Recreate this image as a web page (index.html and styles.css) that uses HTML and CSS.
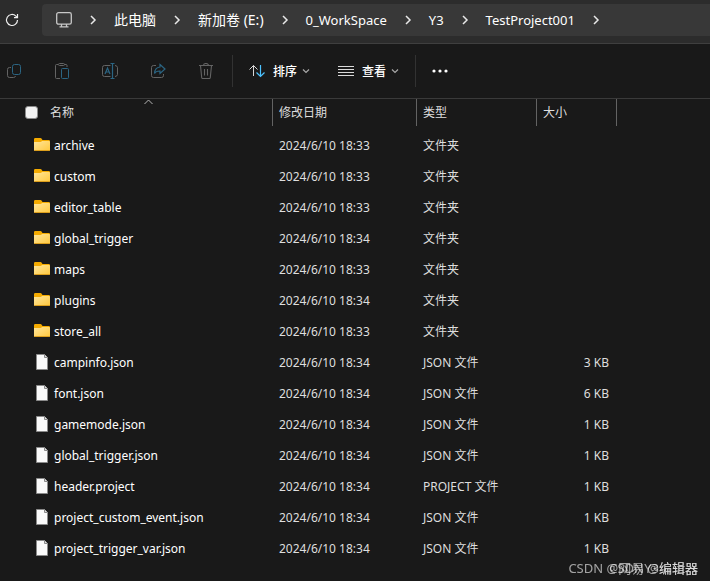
FILE: index.html
```html
<!DOCTYPE html>
<html lang="zh-CN">

<head>
	<meta charset="UTF-8">
	<meta name="viewport" content="width=device-width, initial-scale=1.0">
	<title>TestProject001</title>
	<link rel="stylesheet" href="styles.css">
</head>

<body>

	<!-- Shared icons -->
	<svg class="sprite" aria-hidden="true">
		<defs>
			<linearGradient id="folder-front" x1="0" y1="0" x2="1" y2="1">
				<stop offset="0" stop-color="#ffe69c"></stop>
				<stop offset="1" stop-color="#ffc83d"></stop>
			</linearGradient>
		</defs>
		<symbol id="folder" viewBox="0 0 16 16">
			<path d="M0 2.200Q0 1 1.200 1H6.500q.6 0 1 .5L8.500 3h6.300Q16 3 16 4.200V8H0z" fill="#f5ab00"></path>
			<path d="M0 5h6.500q.6 0 1-.4l.6-.6H15q1 0 1 1v8q0 1-1 1H1q-1 0-1-1z" fill="url(#folder-front)"></path>
			<path d="M.5 13.500h15" stroke="#dd9f1c"></path>
		</symbol>
		<symbol id="file" viewBox="0 0 16 16">
			<path d="M2.500.5h8l3 3v12h-11z" fill="#fafafa" stroke="#8a8a8a"></path>
			<path d="M10.500.5v3h3" fill="#dcdcdc" stroke="#8a8a8a"></path>
		</symbol>
		<symbol id="chevron-right" viewBox="0 0 8 10">
			<path d="M2 1l4 4-4 4" fill="none" stroke="#e8e8e8" stroke-width="1.500"></path>
		</symbol>
		<symbol id="chevron-down" viewBox="0 0 8 8">
			<path d="M1 2.500l3 3 3-3" fill="none" stroke="#a8a8a8" stroke-width="1.200"></path>
		</symbol>
	</svg>

	<header class="address-bar">
		<button type="button" class="refresh" aria-label="刷新">
			<svg width="14" height="14" viewBox="0 0 14 14" fill="none" stroke="#f0f0f0" stroke-width="1.200">
				<path d="M12.500 7A5.500 5.500 0 1 1 10.900 3.100L12.500 4.700"></path>
				<path d="M12.500 1v3.700H9"></path>
			</svg>
		</button>
		<nav class="breadcrumb">
			<svg class="computer" width="16" height="16" viewBox="0 0 16 16" fill="none" stroke="#c8c8c8" stroke-width="1.300">
				<rect x=".7" y=".7" width="14.600" height="11.500" rx="1.800"></rect>
				<path d="M5.500 12v2.500M10.500 12v2.500M3.500 14.800h9"></path>
			</svg>
			<svg class="arrow"><use href="#chevron-right"></use></svg>
			<a href="#" class="zh">此电脑</a>
			<svg class="arrow"><use href="#chevron-right"></use></svg>
			<a href="#" class="zh">新加卷 (E:)</a>
			<svg class="arrow"><use href="#chevron-right"></use></svg>
			<a href="#">0_WorkSpace</a>
			<svg class="arrow"><use href="#chevron-right"></use></svg>
			<a href="#">Y3</a>
			<svg class="arrow"><use href="#chevron-right"></use></svg>
			<a href="#">TestProject001</a>
			<svg class="arrow"><use href="#chevron-right"></use></svg>
		</nav>
	</header>

	<div class="toolbar">
		<div class="actions">
			<button type="button" aria-label="复制" disabled>
				<svg width="16" height="16" viewBox="0 0 16 16" fill="none">
					<path d="M5 4.500H3.500a2 2 0 0 0-2 2v6a2 2 0 0 0 2 2h4a2 2 0 0 0 2-1.500" stroke="#646464"></path>
					<rect x="6.500" y="1.500" width="8" height="10" rx="2" stroke="#2b6583"></rect>
				</svg>
			</button>
			<button type="button" aria-label="粘贴" disabled>
				<svg width="16" height="16" viewBox="0 0 16 16" fill="none">
					<path d="M4 1.500H2.500a1 1 0 0 0-1 1v12a1 1 0 0 0 1 1H6M10.500 1.500H12a1 1 0 0 1 1 1V4" stroke="#646464"></path>
					<rect x="4.500" y=".5" width="6" height="2" rx="1" stroke="#646464"></rect>
					<rect x="7.500" y="5.500" width="7" height="10" rx="1" stroke="#2b6583"></rect>
				</svg>
			</button>
			<button type="button" aria-label="重命名" disabled>
				<svg width="18" height="16" viewBox="0 0 18 16" fill="none">
					<path d="M9.500 2.500h-6a2 2 0 0 0-2 2v7a2 2 0 0 0 2 2h6M14 2.500a2.500 2.500 0 0 1 2.500 2v7a2.500 2.500 0 0 1-2.500 2" stroke="#646464"></path>
					<path d="M4 11l2.500-6L9 11M5 9h3M11.500.5v15M9.500.5h4M9.500 15.500h4" stroke="#2b6583" stroke-width="1.200"></path>
				</svg>
			</button>
			<button type="button" aria-label="共享" disabled>
				<svg width="16" height="16" viewBox="0 0 16 16" fill="none">
					<path d="M6 2.500H3.500a2 2 0 0 0-2 2v8a2 2 0 0 0 2 2h8a2 2 0 0 0 2-2V11" stroke="#646464"></path>
					<path d="M10 1.500l5 4.500-5 4.500V8Q6 7.800 4.500 10.500 4.800 4.500 10 4z" stroke="#2b6583" stroke-width="1.200"></path>
				</svg>
			</button>
			<button type="button" aria-label="删除" disabled>
				<svg width="16" height="16" viewBox="0 0 16 16" fill="none" stroke="#646464" stroke-width="1.100">
					<path d="M1 2.500h14M5.500 2.500a2.500 2 0 0 1 5 0M2.500 2.500l1.200 12q.1 1 1 1h6.600q.9 0 1-1l1.200-12M6.500 6v6.500M9.500 6v6.500"></path>
				</svg>
			</button>
		</div>
		<div class="actions-menu">
			<button type="button">
				<svg width="16" height="14" viewBox="0 0 16 14" fill="none">
					<path d="M4.500 12V1.500M.5 5.500l4-4 4 4" stroke="#d8d8d8"></path>
					<path d="M11.500 1v11.500M7.500 8.500l4 4 4-4" stroke="#4cc2ff" stroke-width="1.200"></path>
				</svg>
				<span>排序</span>
				<svg class="caret"><use href="#chevron-down"></use></svg>
			</button>
			<button type="button">
				<svg width="16" height="14" viewBox="0 0 16 14" stroke="#dadada">
					<path d="M0 2.500h16M0 5.500h16M0 8.500h16M0 11.500h16"></path>
				</svg>
				<span>查看</span>
				<svg class="caret"><use href="#chevron-down"></use></svg>
			</button>
		</div>
		<button type="button" class="more" aria-label="更多">
			<svg width="16" height="4" viewBox="0 0 16 4" fill="#ffffff">
				<circle cx="2" cy="2" r="1.600"></circle>
				<circle cx="8" cy="2" r="1.600"></circle>
				<circle cx="14" cy="2" r="1.600"></circle>
			</svg>
		</button>
	</div>

	<main class="files">
		<svg class="sort-mark" width="9" height="6" viewBox="0 0 9 6" fill="none" stroke="#b4b4b4">
			<path d="M.5 5l4-4 4 4"></path>
		</svg>
		<table>
			<colgroup>
				<col class="col-name">
				<col class="col-date">
				<col class="col-type">
				<col class="col-size">
				<col>
			</colgroup>
			<thead>
				<tr>
					<th>
						<label class="select-all"><input type="checkbox"> 名称</label>
					</th>
					<th>修改日期</th>
					<th>类型</th>
					<th>大小</th>
					<td></td>
				</tr>
			</thead>
			<tbody>
				<tr><td><svg><use href="#folder"></use></svg>archive</td><td>2024/6/10 18:33</td><td>文件夹</td><td></td><td></td></tr>
				<tr><td><svg><use href="#folder"></use></svg>custom</td><td>2024/6/10 18:33</td><td>文件夹</td><td></td><td></td></tr>
				<tr><td><svg><use href="#folder"></use></svg>editor_table</td><td>2024/6/10 18:33</td><td>文件夹</td><td></td><td></td></tr>
				<tr><td><svg><use href="#folder"></use></svg>global_trigger</td><td>2024/6/10 18:34</td><td>文件夹</td><td></td><td></td></tr>
				<tr><td><svg><use href="#folder"></use></svg>maps</td><td>2024/6/10 18:33</td><td>文件夹</td><td></td><td></td></tr>
				<tr><td><svg><use href="#folder"></use></svg>plugins</td><td>2024/6/10 18:34</td><td>文件夹</td><td></td><td></td></tr>
				<tr><td><svg><use href="#folder"></use></svg>store_all</td><td>2024/6/10 18:33</td><td>文件夹</td><td></td><td></td></tr>
				<tr><td><svg><use href="#file"></use></svg>campinfo.json</td><td>2024/6/10 18:34</td><td>JSON 文件</td><td>3 KB</td><td></td></tr>
				<tr><td><svg><use href="#file"></use></svg>font.json</td><td>2024/6/10 18:34</td><td>JSON 文件</td><td>6 KB</td><td></td></tr>
				<tr><td><svg><use href="#file"></use></svg>gamemode.json</td><td>2024/6/10 18:34</td><td>JSON 文件</td><td>1 KB</td><td></td></tr>
				<tr><td><svg><use href="#file"></use></svg>global_trigger.json</td><td>2024/6/10 18:34</td><td>JSON 文件</td><td>1 KB</td><td></td></tr>
				<tr><td><svg><use href="#file"></use></svg>header.project</td><td>2024/6/10 18:34</td><td>PROJECT 文件</td><td>1 KB</td><td></td></tr>
				<tr><td><svg><use href="#file"></use></svg>project_custom_event.json</td><td>2024/6/10 18:34</td><td>JSON 文件</td><td>1 KB</td><td></td></tr>
				<tr><td><svg><use href="#file"></use></svg>project_trigger_var.json</td><td>2024/6/10 18:34</td><td>JSON 文件</td><td>1 KB</td><td></td></tr>
			</tbody>
		</table>
	</main>

	<div class="watermark">CSDN @网易Y3编辑器</div>
	<div class="watermark">CSDN @编辑器</div>

</body>

</html>
```
FILE: styles.css
```css
* {
	margin: 0;
	padding: 0;
	box-sizing: border-box;
}

body {
	min-height: 100vh;
	background-color: #191919;
	font-family: "Noto Sans", "Noto Sans CJK SC", sans-serif;
	font-size: 12px;
	line-height: 16px;
	color: #dedede;
	overflow: hidden;
}

button {
	display: flex;
	align-items: center;
	background: none;
	border: none;
	color: #fff;
	font-family: inherit;
	font-size: 12px;
}

.sprite {
	position: absolute;
	width: 0;
	height: 0;
}

/* Address bar */
.address-bar {
	display: flex;
	height: 44px;
	padding: 4px 0 7px 5px;
	background-color: #2c2c2c;
	border-bottom: 1px solid #3f3f3f;
}

.refresh {
	width: 37px;
}

.breadcrumb {
	flex: 1;
	display: flex;
	align-items: center;
	padding-left: 14px;
	background-color: #383838;
	border-radius: 4px 0 0 4px;
}

.breadcrumb a {
	color: #fff;
	font-size: 13px;
	text-decoration: none;
	white-space: nowrap;
}

.breadcrumb .zh {
	font-size: 14px;
}

.arrow {
	width: 8px;
	height: 10px;
	margin: 0 17px;
}

/* Toolbar */
.toolbar {
	display: flex;
	align-items: center;
	height: 55px;
	border-bottom: 1px solid #3a3a3a;
}

.actions {
	display: flex;
	align-items: center;
	height: 32px;
	padding-right: 2px;
	border-right: 1px solid #323232;
}

.actions button {
	justify-content: center;
	width: 48px;
}

.actions button:first-child {
	width: 38px;
	padding-right: 10px;
}

.actions-menu {
	display: flex;
	gap: 28px;
	height: 32px;
	padding: 0 16px;
	border-right: 1px solid #323232;
}

.actions-menu span {
	margin: 0 5px 0 8px;
	font-weight: 500;
}

.caret {
	width: 8px;
	height: 8px;
}

.more {
	margin-left: 16px;
}

/* File list */
.files {
	position: relative;
}

.sort-mark {
	position: absolute;
	top: 0;
	left: 144px;
}

table {
	width: 100%;
	table-layout: fixed;
	border-collapse: separate;
	border-spacing: 0;
}

.col-name {
	width: 273px;
}

.col-date {
	width: 144px;
}

.col-type {
	width: 120px;
}

.col-size {
	width: 80px;
}

th {
	height: 27px;
	padding-left: 6px;
	border-right: 1px solid #636363;
	font-weight: normal;
	text-align: left;
}

.select-all {
	display: flex;
	align-items: center;
	gap: 12px;
	padding-left: 19px;
}

.select-all input {
	appearance: none;
	width: 13px;
	height: 13px;
	background-color: #f3f3f3;
	border: 1px solid #8b8b8b;
	border-radius: 3px;
}

tbody::before {
	content: "";
	display: block;
	height: 4px;
}

tbody td {
	height: 31px;
	padding-left: 6px;
	white-space: nowrap;
}

tbody td:first-child {
	padding-left: 34px;
	color: #fff;
}

tbody td:nth-child(4) {
	padding-right: 8px;
	text-align: right;
}

tbody svg {
	width: 16px;
	height: 16px;
	margin-right: 4px;
	vertical-align: -3px;
}

.watermark {
	position: fixed;
	right: 12px;
	bottom: 5px;
	color: rgba(255, 255, 255, 0.6);
	font-size: 13px;
}
```
